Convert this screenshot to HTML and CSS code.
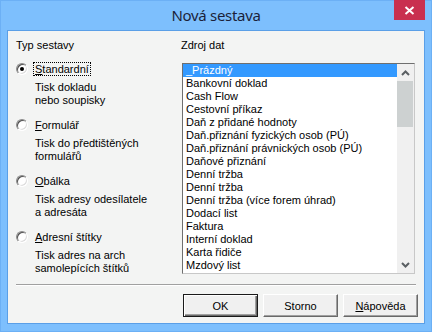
FILE: index.html
```html
<!DOCTYPE html>
<html lang="cs">

<head>
  <meta charset="UTF-8">
  <meta name="viewport" content="width=device-width, initial-scale=1.0">
  <title>Nová sestava</title>
  <link rel="stylesheet" href="styles.css">
</head>

<body>
  <div class="window">
    <div class="titlebar">
      <span></span>
      <h1 class="title">Nová sestava</h1>
      <button class="close" type="button" aria-label="Zavřít">
        <svg width="11" height="9" viewBox="0 0 11 9">
          <path d="M1.5 1 L9.5 8 M9.5 1 L1.5 8" stroke="#fff" stroke-width="2" fill="none" />
        </svg>
      </button>
    </div>

    <div class="frame">
      <div class="panes">
        <!-- typ sestavy -->
        <div class="types">
          <div class="caption">Typ sestavy</div>
          <div class="option">
            <div class="option-row"><span class="radio checked"></span><span class="label focus"><u>S</u>tandardní</span></div>
            <div class="desc">Tisk dokladu<br>nebo soupisky</div>
          </div>
          <div class="option">
            <div class="option-row"><span class="radio"></span><span class="label"><u>F</u>ormulář</span></div>
            <div class="desc">Tisk do předtištěných<br>formulářů</div>
          </div>
          <div class="option">
            <div class="option-row"><span class="radio"></span><span class="label"><u>O</u>bálka</span></div>
            <div class="desc">Tisk adresy odesílatele<br>a adresáta</div>
          </div>
          <div class="option">
            <div class="option-row"><span class="radio"></span><span class="label"><u>A</u>dresní štítky</span></div>
            <div class="desc">Tisk adres na arch<br>samolepících štítků</div>
          </div>
        </div>

        <!-- zdroj dat -->
        <div class="source">
          <div class="caption">Zdroj dat</div>
          <div class="listbox">
            <ul class="items">
              <li class="selected">_Prázdný</li>
              <li>Bankovní doklad</li>
              <li>Cash Flow</li>
              <li>Cestovní příkaz</li>
              <li>Daň z přidané hodnoty</li>
              <li>Daň.přiznání fyzických osob (PÚ)</li>
              <li>Daň.přiznání právnických osob (PÚ)</li>
              <li>Daňové přiznání</li>
              <li>Denní tržba</li>
              <li>Denní tržba</li>
              <li>Denní tržba (více forem úhrad)</li>
              <li>Dodací list</li>
              <li>Faktura</li>
              <li>Interní doklad</li>
              <li>Karta řidiče</li>
              <li>Mzdový list</li>
            </ul>
            <div class="scrollbar">
              <div class="arrow">
                <svg width="9" height="6" viewBox="0 0 9 6"><path d="M1 5 L4.5 1.5 L8 5" stroke="#5a5f63" stroke-width="2" fill="none" /></svg>
              </div>
              <div class="thumb"></div>
              <div class="track"></div>
              <div class="arrow">
                <svg width="9" height="6" viewBox="0 0 9 6"><path d="M1 1 L4.5 4.5 L8 1" stroke="#5a5f63" stroke-width="2" fill="none" /></svg>
              </div>
            </div>
          </div>
        </div>
      </div>

      <div class="separator"></div>

      <div class="buttons">
        <button class="btn default" type="button">OK</button>
        <button class="btn" type="button">Storno</button>
        <button class="btn" type="button"><u>N</u>ápověda</button>
      </div>
    </div>
  </div>
</body>

</html>
```

FILE: styles.css
```css
body {
  margin: 0;
  font-family: "Liberation Sans", Arial, sans-serif;
  font-size: 11px;
  color: #000;
}

.window {
  width: 432px;
  height: 332px;
  box-sizing: border-box;
  background-color: #7dbffd;
  border: 1px solid #6cb0f5;
  padding: 0 6px 7px 6px;
  display: flex;
  flex-direction: column;
}

/* titulek */
.titlebar {
  height: 29px;
  display: grid;
  grid-template-columns: 1fr auto 1fr;
  align-items: start;
}

.title {
  margin: 0;
  padding-top: 4px;
  font-family: "Noto Sans", "Open Sans", sans-serif;
  font-size: 15px;
  font-weight: normal;
  line-height: 20px;
  color: #1b1f3a;
  letter-spacing: -0.3px;
}

.close {
  justify-self: end;
  width: 31px;
  height: 20px;
  margin: -1px 0 0 0;
  padding: 0;
  border: 0;
  background-color: #c9304f;
  display: flex;
  align-items: center;
  justify-content: center;
}

/* obsah okna */
.frame {
  flex: 1;
  background-color: #f3f4f3;
  border: 1px solid #5a9fe7;
  padding: 8px 6px 0 8px;
  display: flex;
  flex-direction: column;
}

.panes {
  display: flex;
}

.caption {
  line-height: 13px;
  height: 13px;
}

.types {
  width: 165px;
  display: flex;
  flex-direction: column;
  gap: 11px;
}

.types .caption {
  margin-bottom: -1px;
}

.option-row {
  display: flex;
  align-items: center;
  height: 14px;
}

.radio {
  width: 12px;
  height: 12px;
  box-sizing: border-box;
  border-radius: 50%;
  border: 1px solid;
  border-color: #8a8a8a #fff #fff #8a8a8a;
  box-shadow: inset 1px 1px #505050, inset -1px -1px #dcdcdc;
  background-color: #fff;
  margin-right: 5px;
  display: flex;
  align-items: center;
  justify-content: center;
}

.radio.checked::after {
  content: "";
  width: 4px;
  height: 4px;
  border-radius: 50%;
  background-color: #000;
}

.label {
  line-height: 12px;
  padding: 0 1px;
  border: 1px dotted transparent;
}

.label.focus {
  border-color: #000;
}

.desc {
  margin-top: 5px;
  padding-left: 19px;
  line-height: 13px;
}

.source {
  flex: 1;
  display: flex;
  flex-direction: column;
}

/* seznam */
.listbox {
  margin-top: 11px;
  margin-left: 1px;
  width: 233px;
  height: 211px;
  box-sizing: border-box;
  border: 1px solid;
  border-color: #6f6f6f #c8c8c8 #c8c8c8 #6f6f6f;
  background-color: #fff;
  display: flex;
}

.items {
  flex: 1;
  margin: 0;
  padding: 0;
  list-style: none;
  overflow: hidden;
}

.items li {
  height: 13px;
  line-height: 13px;
  padding-left: 3px;
  white-space: nowrap;
}

.items li.selected {
  background-color: #3399ff;
  color: #fff;
}

.scrollbar {
  width: 17px;
  background-color: #f0f0f0;
  display: flex;
  flex-direction: column;
}

.arrow {
  height: 17px;
  display: flex;
  align-items: center;
  justify-content: center;
}

.thumb {
  height: 46px;
  margin-right: 1px;
  background-color: #cdd1d1;
}

.track {
  flex: 1;
}

.separator {
  margin: 9px 0 0 0;
  height: 1px;
  border-bottom: 1px solid #fff;
  background-color: #a0a0a0;
  width: 400px;
}

/* tlačítka */
.buttons {
  display: flex;
  justify-content: flex-end;
  gap: 5px;
  margin-top: 8px;
}

.btn {
  width: 75px;
  height: 23px;
  padding: 0;
  font-family: inherit;
  font-size: 11px;
  color: #000;
  background-color: #f0f0f0;
  border: 1px solid;
  border-color: #fff #696969 #696969 #fff;
  box-shadow: inset -1px -1px #a0a0a0;
}

.btn.default {
  border-color: #1a1a1a;
  box-shadow: inset 1px 1px #fff, inset -1px -1px #696969, inset -2px -2px #a0a0a0;
}
```
